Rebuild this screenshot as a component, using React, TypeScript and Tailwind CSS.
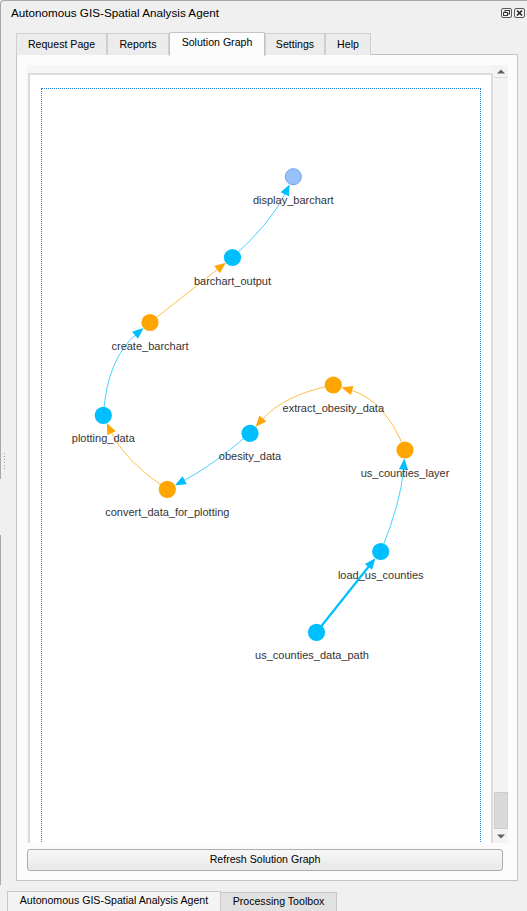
import React from 'react';

const BLUE = '#00bfff';
const ORANGE = '#ffa500';

type GNode = { x: number; y: number; kind: 'b' | 'o' | 'd'; label: string; lx?: number };

const NODES: Record<string, GNode> = {
  display: { x: 293.3, y: 176.7, kind: 'd', label: 'display_barchart' },
  bout: { x: 232.5, y: 257.5, kind: 'b', label: 'barchart_output' },
  create: { x: 150, y: 322.5, kind: 'o', label: 'create_barchart' },
  plot: { x: 103.3, y: 415.3, kind: 'b', label: 'plotting_data' },
  conv: { x: 167.3, y: 489.3, kind: 'o', label: 'convert_data_for_plotting' },
  obes: { x: 250, y: 433.3, kind: 'b', label: 'obesity_data' },
  extr: { x: 333.3, y: 385, kind: 'o', label: 'extract_obesity_data' },
  layer: { x: 405, y: 450, kind: 'o', label: 'us_counties_layer' },
  load: { x: 380.7, y: 551.5, kind: 'b', label: 'load_us_counties' },
  path: { x: 316.5, y: 632.3, kind: 'b', label: 'us_counties_data_path', lx: 312 },
};

type GEdge = { f: string; t: string; c?: [number, number]; w?: number };

const EDGES: GEdge[] = [
  { f: 'path', t: 'load', w: 2.2 },
  { f: 'load', t: 'layer', c: [401, 503] },
  { f: 'layer', t: 'extr', c: [385, 400] },
  { f: 'extr', t: 'obes', c: [283.5, 395] },
  { f: 'obes', t: 'conv', c: [212, 466] },
  { f: 'conv', t: 'plot', c: [124.4, 461] },
  { f: 'plot', t: 'create', c: [107, 359] },
  { f: 'create', t: 'bout' },
  { f: 'bout', t: 'display', c: [271, 223] },
];

const R = 8.6;

function Edge({ e }: { e: GEdge }) {
  const a = NODES[e.f];
  const b = NODES[e.t];
  const c = e.c ?? [a.x, a.y];
  const dx = b.x - c[0];
  const dy = b.y - c[1];
  const len = Math.hypot(dx, dy);
  const ux = dx / len;
  const uy = dy / len;
  const r = 8.6;
  const tipX = b.x - ux * r;
  const tipY = b.y - uy * r;
  const L = 11;
  const hw = 4.6;
  const baseX = tipX - ux * L;
  const baseY = tipY - uy * L;
  const nx = -uy;
  const ny = ux;
  const color = a.kind === 'o' ? ORANGE : BLUE;
  const d = e.c
    ? `M ${a.x} ${a.y} Q ${e.c[0]} ${e.c[1]} ${baseX + ux * 2} ${baseY + uy * 2}`
    : `M ${a.x} ${a.y} L ${baseX + ux * 2} ${baseY + uy * 2}`;
  const thick = (e.w ?? 1) > 1;
  return (
    <g>
      <path d={d} fill="none" stroke={color} strokeWidth={e.w ?? 1} strokeOpacity={thick ? 1 : 0.72} />
      <polygon
        points={`${tipX},${tipY} ${baseX + nx * hw},${baseY + ny * hw} ${baseX - nx * hw},${baseY - ny * hw}`}
        fill={color}
      />
    </g>
  );
}

function Graph() {
  return (
    <svg width={438} height={778} viewBox="42 89 438 778" className="block">
      {EDGES.map((e, i) => (
        <Edge key={i} e={e} />
      ))}
      {Object.entries(NODES).map(([k, n]) =>
        n.kind === 'd' ? (
          <circle key={k} cx={n.x} cy={n.y} r={8} fill="#97c2fc" stroke="#6f9fe6" strokeWidth={1} />
        ) : (
          <circle key={k} cx={n.x} cy={n.y} r={R} fill={n.kind === 'o' ? ORANGE : BLUE} />
        )
      )}
      {Object.entries(NODES).map(([k, n]) => (
        <text
          key={k + 'l'}
          x={n.lx ?? n.x}
          y={n.y + 27}
          textAnchor="middle"
          fontFamily="'Liberation Sans', Arial, sans-serif"
          fontSize={11}
          fill="#343434"
        >
          {n.label}
        </text>
      ))}
    </svg>
  );
}

function FloatIcon() {
  return (
    <svg width="11" height="10" viewBox="0 0 11 10">
      <rect x="0.5" y="0.5" width="10" height="9" rx="1.5" fill="#f4f4f4" stroke="#5a5a5a" />
      <rect x="4" y="2.5" width="4.5" height="3.5" fill="none" stroke="#3a3a3a" />
      <rect x="2.5" y="4.5" width="4" height="3" fill="#f4f4f4" stroke="#3a3a3a" />
    </svg>
  );
}

function CloseIcon() {
  return (
    <svg width="11" height="10" viewBox="0 0 11 10">
      <rect x="0.5" y="0.5" width="10" height="9" rx="1.5" fill="#f4f4f4" stroke="#5a5a5a" />
      <path d="M3 2.5 L8 7.5 M8 2.5 L3 7.5" stroke="#222" strokeWidth="1.6" />
    </svg>
  );
}

const tabs = [
  { name: 'Request Page', w: 'w-[91px]' },
  { name: 'Reports', w: 'w-[62px]' },
  { name: 'Solution Graph', w: 'w-[96px]', sel: true },
  { name: 'Settings', w: 'w-[60px]' },
  { name: 'Help', w: 'w-[46px]' },
];

export default function App() {
  return (
    <div className="w-[527px] h-[911px] bg-[#f0f0f0] flex flex-col overflow-hidden font-['Liberation_Sans',Arial,sans-serif] text-black">
      {/* title bar */}
      <div className="h-[27px] shrink-0 border-t border-l border-[#a9a9a9] rounded-tl-[4px] flex items-center pl-[10px] pr-[2px]">
        <span className="text-[11.7px] flex-1 pb-[3px]">Autonomous GIS-Spatial Analysis Agent</span>
        <div className="flex gap-[2px] items-center pb-[3px]">
          <FloatIcon />
          <CloseIcon />
        </div>
      </div>

      {/* middle */}
      <div className="h-[858px] shrink-0 flex flex-row">
        {/* left gutter with frame */}
        <div className="w-[16px] shrink-0 flex flex-col">
          <div className="h-[452px] border-l border-[#a9a9a9] flex flex-col justify-end items-start pl-[3px] pb-[10px] gap-[2px]">
            {[0, 1, 2, 3, 4, 5].map((i) => (
              <div key={i} className="w-[1px] h-[1px] bg-[#9a9a9a]" />
            ))}
          </div>
          <div className="h-[56px]" />
          <div className="flex-1 border-l border-[#a9a9a9]" />
        </div>

        {/* main column */}
        <div className="w-[502px] shrink-0 flex flex-col">
          {/* tab row */}
          <div className="h-[28px] flex items-end relative z-10">
            {tabs.map((t) =>
              t.sel ? (
                <div
                  key={t.name}
                  className={`${t.w} h-[24px] -mb-px bg-[#fcfcfc] border border-b-0 border-[#c4c4c4] rounded-t-[2px] flex items-center justify-center text-[10.6px] pb-[3px]`}
                >
                  {t.name}
                </div>
              ) : (
                <div
                  key={t.name}
                  className={`${t.w} h-[22px] bg-[#ececec] border border-b-0 border-[#cfcfcf] flex items-center justify-center text-[10.6px] pt-[1px]`}
                >
                  {t.name}
                </div>
              )
            )}
          </div>

          {/* pane */}
          <div className="h-[827px] -mt-px border border-[#c4c4c4] bg-[#fcfcfc] pt-[10px] pl-[10px] pr-[9px] pb-[9px] flex flex-col gap-[6px]">
            {/* scroll area */}
            <div className="h-[778px] flex flex-row">
              {/* viewport */}
              <div className="w-[467px] h-[778px] overflow-hidden bg-[#f5f5f5] pt-[8px] px-[1px]">
                <div className="w-[465px] h-[900px] bg-white border-2 border-[#dcdcdc] pl-[11px] pt-[13px]">
                  <div className="w-[440px] h-[780px] border border-dotted border-[#1f7fd6]">
                    <Graph />
                  </div>
                </div>
              </div>
              {/* scrollbar */}
              <div className="w-[14px] h-[778px] bg-[#f3f3f3] flex flex-col">
                <div className="h-[13px] border-b border-[#dcdcdc] flex items-center justify-center">
                  <svg width="8" height="5" viewBox="0 0 8 5">
                    <polygon points="0,4.5 4,0.5 8,4.5" fill="#606060" />
                  </svg>
                </div>
                <div className="flex-1 flex flex-col justify-end">
                  <div className="h-[37px] bg-[#dadada] border border-[#cdcdcd]" />
                </div>
                <div className="h-[14px] flex items-center justify-center">
                  <svg width="8" height="5" viewBox="0 0 8 5">
                    <polygon points="0,0.5 4,4.5 8,0.5" fill="#606060" />
                  </svg>
                </div>
              </div>
            </div>

            {/* button */}
            <div className="w-[476px] h-[22px] rounded-[3px] border border-[#adadad] bg-gradient-to-b from-[#f7f7f7] to-[#e9e9e9] flex items-center justify-center text-[10.6px]">
              Refresh Solution Graph
            </div>
          </div>
        </div>
        <div className="flex-1" />
      </div>

      {/* bottom tab bar */}
      <div className="flex-1 flex flex-row items-end pl-[7px]">
        <div className="w-[214px] h-[20px] bg-[#f4f4f4] border border-b-0 border-[#c8c8c8] flex items-center justify-center text-[10.6px] pb-[1px]">
          Autonomous GIS-Spatial Analysis Agent
        </div>
        <div className="w-[117px] h-[19px] -ml-px bg-[#e1e1e1] border border-b-0 border-[#c8c8c8] flex items-center justify-center text-[10.6px] pb-[1px]">
          Processing Toolbox
        </div>
      </div>
    </div>
  );
}
